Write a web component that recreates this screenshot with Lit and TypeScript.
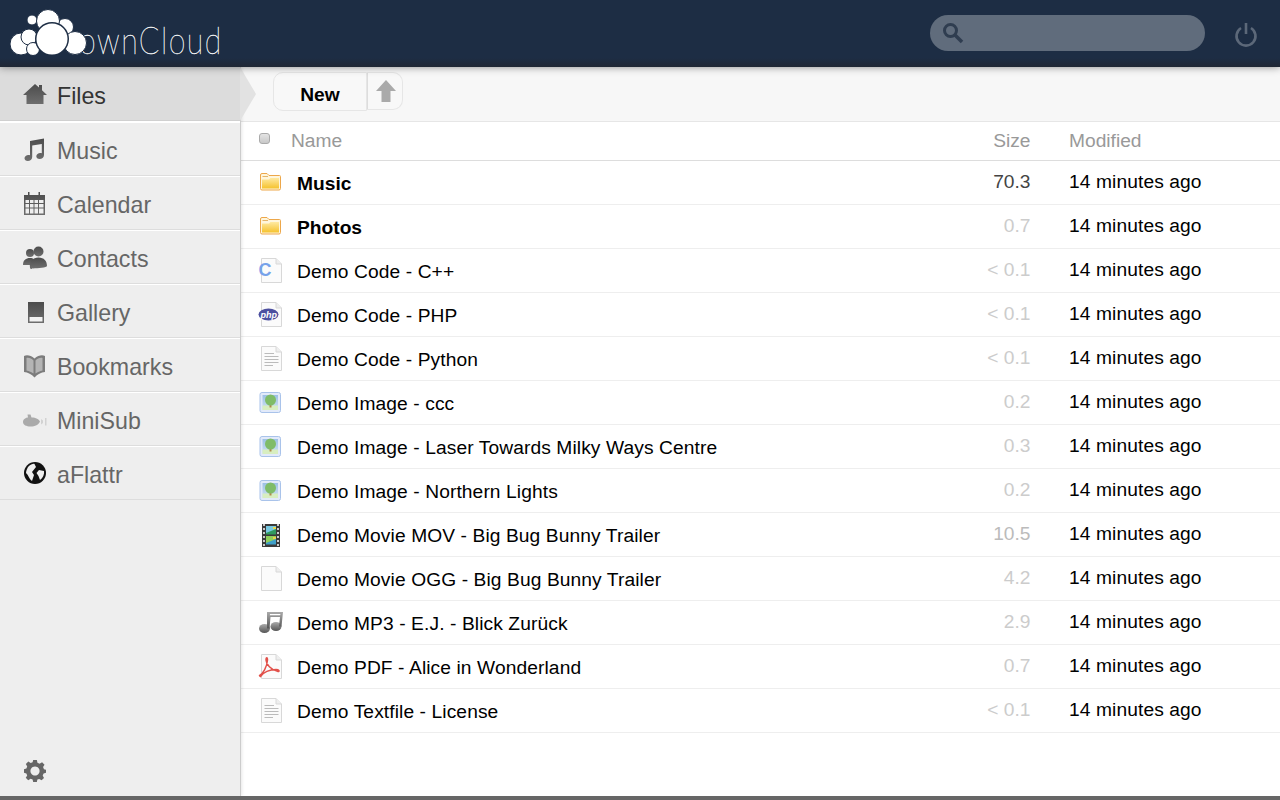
import { LitElement, css, html, svg } from 'lit';
import { customElement } from 'lit/decorators.js';

const NAV_FILL = svg`<defs><linearGradient id="nv" x1="0" y1="0" x2="0" y2="1"><stop offset="0" stop-color="#4c4c4c"/><stop offset="1" stop-color="#6e6e6e"/></linearGradient></defs>`;

const navIcons: Record<string, unknown> = {
    home: svg`<path fill="url(#nv)" d="M12 1 L16 4.5 V2 H19 V7.2 L24 12 H20.5 V21 H3.5 V12 H0 Z"/>`,
    music: svg`<path fill="url(#nv)" d="M7 4 L21 1.5 V18 C21 20.5 18.8 22 16.6 22 C14.5 22 13.3 20.8 13.3 19.3 C13.3 17.4 15.3 16 17.2 16 C17.8 16 18.3 16.1 18.8 16.3 V7 L9.2 8.6 V20 C9.2 22.5 7 24 4.8 24 C2.8 24 1.5 22.8 1.5 21.3 C1.5 19.4 3.5 18 5.4 18 C6 18 6.5 18.1 7 18.3 Z"/>`,
    calendar: svg`<path fill="url(#nv)" fill-rule="evenodd" d="M1 4 H5 V1 H6.5 V4 H15.5 V1 H17 V4 H22 V24 H1 Z M2.5 9 V12 H6 V9 Z M7 9 V12 H10.5 V9 Z M11.5 9 V12 H15 V9 Z M16 9 V12 H20.5 V9 Z M2.5 13 V16.5 H6 V13 Z M7 13 V16.5 H10.5 V13 Z M11.5 13 V16.5 H15 V13 Z M16 13 V16.5 H20.5 V13 Z M2.5 17.5 V22.5 H6 V17.5 Z M7 17.5 V22.5 H10.5 V17.5 Z M11.5 17.5 V22.5 H15 V17.5 Z M16 17.5 V22.5 H20.5 V17.5 Z"/>`,
    contacts: svg`<g fill="url(#nv)"><circle cx="7" cy="8" r="4"/><circle cx="15.5" cy="6.5" r="5"/><path d="M0 20 C0 15 3 13 7 13 C11 13 11 15 11 18 V20 Z"/><path d="M7 23 C6 16 10 12.5 15.5 12.5 C21 12.5 24 16 24 21 C24 23 7 24 7 23 Z"/></g>`,
    gallery: svg`<path fill="url(#nv)" d="M5 3 H21 V24 H5 Z"/><path fill="#f2f2f2" d="M6.5 18 H19.5 V22.5 H6.5 Z"/>`,
    bookmarks: svg`<path fill="#7c7c7c" d="M1 3 C4 1.5 8 2.5 11.5 5.5 C15 2.5 19 1.5 22 3 V19 C18 19.5 14.5 21 11.5 24.5 C8.5 21 5 19.5 1 19 Z"/><path fill="#b4b4b4" d="M3.5 5 C6 4.5 8.5 5.5 10.5 7.5 V20.5 C8.5 19 6 18 3.5 17.5 Z M19.5 5 C17 4.5 14.5 5.5 12.5 7.5 V20.5 C14.5 19 17 18 19.5 17.5 Z"/>`,
    minisub: svg`<g fill="#aaa"><path d="M0 15 C0 12 3 10.5 5 10.5 L4.5 7.5 H7.5 L8.5 10.5 C13 10.5 16 12.5 17 14.5 C16 17.5 12 19.5 7.5 19.5 C3.5 19.5 0 18 0 15 Z"/></g><path fill="#d2d2d2" d="M18 12 L20 13.5 V16 L18 17.5 Z M22 11 H23.5 V18.5 H22 Z"/>`,
    aflattr: svg`<circle cx="12" cy="12" r="11" fill="#111"/><path fill="#eee" d="M5 6 C7.5 3 11 2.5 11.5 3 L13 6 L9 11 L11 14 L9 20 C6 18 5.5 14 3 12 C3 10 4 8 5 6 Z M16 9 L21 10 C21.5 13 20 17 17 19 L15.5 15 L13.5 12 Z" /> `,
};

const doc = (extra: unknown = '') => svg`<path d="M4.5 1.5 H19 L24.5 7 V25.5 H4.5 Z" fill="#fbfbfb" stroke="#d8d8d8"/><path d="M19 1.5 V7 H24.5" fill="#eee" stroke="#d8d8d8"/>${extra}`;
const textLines = svg`<path stroke="#bbb" d="M7.5 8.5 H17 M7.5 11.5 H21.5 M7.5 14.5 H21.5 M7.5 17.5 H21.5 M7.5 20.5 H16"/>`;

const fileIcons: Record<string, unknown> = {
    folder: svg`<defs><linearGradient id="fd" x1="0" y1="0" x2="0" y2="1"><stop offset="0" stop-color="#ffe9a0"/><stop offset="1" stop-color="#f5c22e"/></linearGradient></defs>
        <g transform="translate(0 -1.5)"><path d="M3.5 7.5 Q3.5 6 5 6 H10 L12 8 H22.5 Q23.5 8 23.5 9 V21 Q23.5 22.5 22 22.5 H5 Q3.5 22.5 3.5 21 Z" fill="#fff6dc" stroke="#eda74a"/>
        <path d="M5 12 H12 L13.5 10.5 H22 V21 H5 Z" fill="url(#fd)"/><path d="M5.5 9 H11" stroke="#e4b56a" fill="none"/></g>`,
    cpp: doc(svg`<text x="1.5" y="19" font-family="Liberation Sans" font-weight="700" font-size="18" fill="#76a2ea">C</text>`),
    php: doc(svg`<ellipse cx="11.5" cy="13.5" rx="10" ry="6" fill="#4c4f9f"/><text x="3.5" y="16.5" font-family="Liberation Sans" font-weight="700" font-style="italic" font-size="9" fill="#fff">php</text>`),
    text: doc(textLines),
    image: svg`<defs><linearGradient id="sk" x1="0" y1="0" x2="0" y2="1"><stop offset="0" stop-color="#9cc0e4"/><stop offset="1" stop-color="#cfe3f2"/></linearGradient></defs>
        <rect x="3" y="3.5" width="20.5" height="20" rx="2" fill="#e2eafa" stroke="#a9c3ea"/><rect x="5.5" y="6" width="15.5" height="15" fill="url(#sk)"/>
        <rect x="5.5" y="16.5" width="15.5" height="4.5" fill="#d8eec0"/><rect x="12.5" y="14" width="2" height="4.5" fill="#b08a4e"/><circle cx="13.5" cy="11" r="5.5" fill="#7fbc68"/>`,
    movie: svg`<rect x="5" y="3" width="18" height="23" fill="#3a3a3a"/><rect x="9" y="5" width="10" height="8.5" fill="#2f9a5f"/><rect x="9" y="15" width="10" height="8.5" fill="#3f9fc9"/>
        <path d="M9 5 H19 V8 L9 12 Z" fill="#78c9e2"/><path d="M9 15 H19 V18 L9 22 Z" fill="#8fd05a"/>
        <path stroke="#ccc" stroke-width="2" stroke-dasharray="2 2" d="M7 3 V26 M21 3 V26" fill="none"/><path stroke="#e8d64a" stroke-width="2" d="M16 7 H19 M16 17 H19"/>`,
    blank: doc(),
    audio: svg`<defs><linearGradient id="au" x1="0" y1="0" x2="0" y2="1"><stop offset="0" stop-color="#aaa"/><stop offset="1" stop-color="#555"/></linearGradient></defs>
        <g fill="url(#au)"><ellipse cx="7.5" cy="19.5" rx="5.5" ry="4.5"/><ellipse cx="19" cy="17.5" rx="5.5" ry="4.5"/>
        <path fill-rule="evenodd" d="M10 3 H26 L24.5 17.5 H22 L23 8 H13.5 L12.5 19.5 H10 Z M13 5 L12.8 6.3 H23.2 L23.4 5 Z"/></g>`,
    pdf: doc(svg`<path fill="none" stroke="#e2504a" stroke-width="1.5" d="M2 23 C6 21 10 14 10.5 7 C10.5 4 9 4 9 7 C9 11 14 17 21 18.5 C23 18.5 22 16.5 19 16.5 C13 16.5 6 19 3 24"/>`),
};

interface FileRow { name: string; icon: string; size: string; color: string; dir?: boolean; }

const rows: FileRow[] = [
    { name: 'Music', icon: 'folder', size: '70.3', color: '#444', dir: true },
    { name: 'Photos', icon: 'folder', size: '0.7', color: '#ccc', dir: true },
    { name: 'Demo Code - C++', icon: 'cpp', size: '< 0.1', color: '#ccc' },
    { name: 'Demo Code - PHP', icon: 'php', size: '< 0.1', color: '#ccc' },
    { name: 'Demo Code - Python', icon: 'text', size: '< 0.1', color: '#ccc' },
    { name: 'Demo Image - ccc', icon: 'image', size: '0.2', color: '#ccc' },
    { name: 'Demo Image - Laser Towards Milky Ways Centre', icon: 'image', size: '0.3', color: '#ccc' },
    { name: 'Demo Image - Northern Lights', icon: 'image', size: '0.2', color: '#ccc' },
    { name: 'Demo Movie MOV - Big Bug Bunny Trailer', icon: 'movie', size: '10.5', color: '#bbb' },
    { name: 'Demo Movie OGG - Big Bug Bunny Trailer', icon: 'blank', size: '4.2', color: '#ccc' },
    { name: 'Demo MP3 - E.J. - Blick Zurück', icon: 'audio', size: '2.9', color: '#ccc' },
    { name: 'Demo PDF - Alice in Wonderland', icon: 'pdf', size: '0.7', color: '#ccc' },
    { name: 'Demo Textfile - License', icon: 'text', size: '< 0.1', color: '#ccc' },
];

const navItems = [
    ['Files', 'home'], ['Music', 'music'], ['Calendar', 'calendar'], ['Contacts', 'contacts'],
    ['Gallery', 'gallery'], ['Bookmarks', 'bookmarks'], ['MiniSub', 'minisub'], ['aFlattr', 'aflattr'],
];

@customElement('app-root')
export class AppRoot extends LitElement {
    static override styles = css`
        :host {
            display: flex;
            flex-direction: column;
            height: 100vh;
            overflow: hidden;
            font-family: "Liberation Sans", Arial, sans-serif;
            font-size: 19.2px;
            color: #000;
            background: #fff;
            border-bottom: 4px solid #666;
            box-sizing: border-box;
        }

        header {
            flex: 0 0 67px;
            box-sizing: border-box;
            display: flex;
            align-items: center;
            background: linear-gradient(#1d2d44 0, #1d2d44 58px, #202734 67px);
            box-shadow: 0 0 8px rgba(0, 0, 0, .45);
            position: relative;
            z-index: 2;
        }

        .logo {
            position: relative;
            width: 230px;
            height: 67px;
            flex: none;
        }

        .logo svg {
            position: absolute;
            left: 9px;
            top: 9px;
        }

        .logo span {
            position: absolute;
            left: 79px;
            top: 18px;
            font-family: Lato, sans-serif;
            font-weight: 100;
            font-size: 37px;
            line-height: 44px;
            letter-spacing: 1.8px;
            color: #fff;
            -webkit-text-stroke: .35px #fff;
            transform: scaleX(.82);
            transform-origin: left center;
        }

        .search {
            margin-left: auto;
            margin-top: -1px;
            width: 275px;
            height: 36px;
            box-sizing: border-box;
            border-radius: 18px;
            background: #606c7c;
            display: flex;
            align-items: center;
            padding-left: 12px;
        }

        .power {
            margin: 0 22px 0 29px;
            display: block;
        }

        main {
            flex: 1;
            display: flex;
            min-height: 0;
        }

        nav {
            flex: 0 0 240px;
            display: flex;
            flex-direction: column;
            background: #eee;
            border-right: 1px solid #ccc;
            box-shadow: 0 0 4px rgba(0, 0, 0, .15);
            position: relative;
            z-index: 1;
        }

        .item {
            height: 54px;
            flex: none;
            box-sizing: border-box;
            display: flex;
            align-items: center;
            gap: 10px;
            padding-left: 23px;
            font-size: 23.2px;
            color: #666;
            border-top: 1px solid #fff;
            border-bottom: 1px solid #ddd;
            position: relative;
        }

        .item span {
            padding-top: 4px;
        }

        .item.active {
            color: #333;
            background: #dcdcdc;
            border-top: none;
            border-bottom-color: #d0d0d0;
            box-shadow: 0 1px 0 #fff;
            margin-bottom: 1px;
        }

        .item.active span {
            padding-top: 6px;
        }

        .item.active svg {
            margin-top: 4px;
        }

        .item.active::after {
            content: '';
            position: absolute;
            left: 100%;
            top: 0;
            border-left: 16px solid #e2e2e2;
            border-top: 27px solid transparent;
            border-bottom: 27px solid transparent;
        }

        .item svg {
            flex: none;
        }

        .settings {
            margin: auto 0 14px 24px;
            display: block;
            flex: none;
        }

        .content {
            flex: 1;
            min-width: 0;
            display: flex;
            flex-direction: column;
        }

        .controls {
            flex: 0 0 55px;
            box-sizing: border-box;
            display: flex;
            align-items: flex-start;
            padding: 5px 0 0 32px;
            background: #f7f7f7;
            border-bottom: 1px solid #e6e6e6;
        }

        .new {
            width: 94px;
            height: 39px;
            box-sizing: border-box;
            display: flex;
            align-items: center;
            justify-content: center;
            padding-top: 6px;
            font-weight: 700;
            background: #f8f8f8;
            border: 1px solid #e6e6e6;
            border-radius: 10px 0 0 10px;
        }

        .up {
            width: 36px;
            height: 38px;
            box-sizing: border-box;
            display: flex;
            align-items: center;
            justify-content: center;
            padding-left: 2px;
            background: #f8f8f8;
            border: 1px solid #e6e6e6;
            border-left-color: #ddd;
            border-radius: 0 10px 10px 0;
        }

        .row {
            display: grid;
            grid-template-columns: 56px 1fr 80px 249.5px;
            align-items: center;
            height: 44px;
            box-sizing: border-box;
            border-bottom: 1px solid #eee;
        }

        .row.head {
            height: 39px;
            color: #999;
            border-bottom-color: #ddd;
        }

        .row.head .label {
            padding: 0 0 0 50px;
            margin-left: -56px;
            letter-spacing: 0;
        }

        .row.head .size,
        .row.head .date {
            color: #999;
            padding-bottom: 0;
            letter-spacing: 0;
        }

        .check {
            width: 11px;
            height: 11px;
            box-sizing: border-box;
            margin: -6px 0 0 18px;
            border: 1px solid #aaa;
            border-radius: 3px;
            background: linear-gradient(#e4e4e4, #c8c8c8);
        }

        .icon {
            display: block;
            margin-left: 16px;
        }

        .label {
            padding-top: 3px;
            white-space: nowrap;
            letter-spacing: .1px;
        }

        .dir {
            font-weight: 700;
            letter-spacing: 0;
        }

        .size {
            text-align: right;
            padding-bottom: 1px;
        }

        .date {
            padding-left: 38.5px;
            padding-bottom: 1px;
            letter-spacing: .1px;
        }
    `;

    renderFile(f: FileRow) {
        return html`
            <div class="row">
                <svg class="icon" width="26" height="28" viewBox="0 0 26 28">${fileIcons[f.icon]}</svg>
                <div class="label ${f.dir ? 'dir' : ''}">${f.name}</div>
                <div class="size" style="color:${f.color}">${f.size}</div>
                <div class="date">14 minutes ago</div>
            </div>
        `;
    }

    override render() {
        return html`
            <header>
                <div class="logo">
                    <span>ownCloud</span>
                    <svg width="80" height="50" viewBox="0 0 80 50">
                        <g fill="#fff" stroke="#1d2d44" stroke-width="1">
                            <circle cx="23" cy="11" r="5"/>
                            <circle cx="56" cy="18" r="8.5"/>
                            <circle cx="39" cy="12" r="11.5"/>
                            <circle cx="12" cy="35" r="11"/>
                            <circle cx="20" cy="28" r="8"/>
                            <circle cx="24" cy="40" r="6.5"/>
                            <circle cx="66" cy="34" r="11.5"/>
                        </g>
                        <circle cx="43" cy="30" r="17" fill="#1d2d44"/>
                        <circle cx="43" cy="30" r="15.5" fill="#fff"/>
                    </svg>
                </div>
                <div class="search">
                    <svg width="22" height="22" viewBox="0 0 22 22" fill="none" stroke="#2f3d50">
                        <circle cx="8.5" cy="8.5" r="6" stroke-width="3"/>
                        <path d="M13 13 L20 20" stroke-width="3.5"/>
                    </svg>
                </div>
                <svg class="power" width="24" height="26" viewBox="0 0 24 26" fill="none" stroke="#5c6879" stroke-width="2.6">
                    <path d="M7 7 A9.5 9.5 0 1 0 17 7"/>
                    <path d="M12 2 V13"/>
                </svg>
            </header>
            <main>
                <nav>
                    ${navItems.map(([label, icon], i) => html`
                        <div class="item ${i === 0 ? 'active' : ''}">
                            <svg width="24" height="25" viewBox="0 0 24 25">${NAV_FILL}${navIcons[icon]}</svg>
                            <span>${label}</span>
                        </div>
                    `)}
                    <svg class="settings" width="22" height="22" viewBox="0 0 24 24">
                        <path fill="#666" fill-rule="evenodd" d="M10 0 H14 L14.7 3 L17 4 L19.7 2.4 L22.4 5.1 L20.8 7.7 L21.8 10 L24 10.5 V14 L21.4 14.6 L20.4 17 L21.8 19.6 L19.2 22.2 L16.6 20.6 L14.6 21.4 L14 24 H10 L9.4 21.4 L7.2 20.5 L4.6 22.1 L1.9 19.4 L3.5 16.8 L2.6 14.6 L0 14 V10 L2.6 9.4 L3.5 7 L2 4.4 L4.7 1.7 L7.3 3.3 L9.4 2.4 Z M12 7 A5 5 0 1 0 12.01 7 Z"/>
                    </svg>
                </nav>
                <div class="content">
                    <div class="controls">
                        <div class="new">New</div>
                        <div class="up">
                            <svg width="22" height="24" viewBox="0 0 22 24"><path fill="#aaa" d="M11 1 L21 12 H15.5 V23 H6.5 V12 H1 Z"/></svg>
                        </div>
                    </div>
                    <div class="row head">
                        <div class="check"></div>
                        <div class="label">Name</div>
                        <div class="size">Size</div>
                        <div class="date">Modified</div>
                    </div>
                    ${rows.map((f) => this.renderFile(f))}
                </div>
            </main>
        `;
    }
}
